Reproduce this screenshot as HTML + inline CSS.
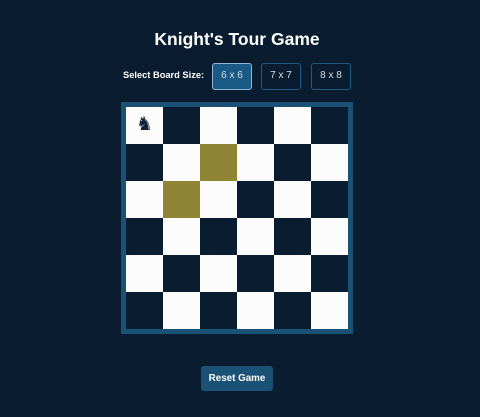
<!DOCTYPE html>
<html><head><meta charset="utf-8"><style>
html,body{margin:0;padding:0;width:480px;height:417px;background:#0a1d30;overflow:hidden;font-family:"Liberation Sans",sans-serif;}
h1{position:absolute;left:0;width:474px;top:29px;margin:0;text-align:center;color:#fff;font-size:17.5px;font-weight:bold;}
.lbl{position:absolute;left:123px;top:70px;color:#fff;font-size:9.3px;font-weight:bold;}
.btn{position:absolute;top:63px;width:40px;height:27px;box-sizing:border-box;border:1.5px solid #1d5a85;border-radius:3px;color:#d8dde3;font-size:10px;text-align:center;line-height:24px;}
.sel{background:#1a5a85;border-color:#8fb4d8;}
.board{position:absolute;left:121px;top:102px;width:222px;height:222px;border:5px solid #1a5276;background:#0a1d30;}
.c{position:absolute;width:37px;height:37px;}
.w{background:#fcfcfc;}
.h{background:#8f8535;}
.k{position:absolute;left:126px;top:114px;width:37px;text-align:center;font-size:19px;line-height:22px;color:#0e2238;}
.reset{position:absolute;left:201px;top:366px;width:72px;height:25px;background:#1a5276;border-radius:3px;color:#fff;font-size:9.8px;font-weight:bold;text-align:center;line-height:25px;}
</style></head><body>
<h1>Knight's Tour Game</h1>
<div class="lbl">Select Board Size:</div>
<div class="btn sel" style="left:212px">6 x 6</div>
<div class="btn" style="left:261px">7 x 7</div>
<div class="btn" style="left:311px">8 x 8</div>
<div class="board" id="b">
<div class="c w" style="left:0;top:0"></div><div class="c w" style="left:74px;top:0"></div><div class="c w" style="left:148px;top:0"></div>
<div class="c w" style="left:37px;top:37px"></div><div class="c h" style="left:74px;top:37px"></div><div class="c w" style="left:111px;top:37px"></div><div class="c w" style="left:185px;top:37px"></div>
<div class="c w" style="left:0;top:74px"></div><div class="c h" style="left:37px;top:74px"></div><div class="c w" style="left:74px;top:74px"></div><div class="c w" style="left:148px;top:74px"></div>
<div class="c w" style="left:37px;top:111px"></div><div class="c w" style="left:111px;top:111px"></div><div class="c w" style="left:185px;top:111px"></div>
<div class="c w" style="left:0;top:148px"></div><div class="c w" style="left:74px;top:148px"></div><div class="c w" style="left:148px;top:148px"></div>
<div class="c w" style="left:37px;top:185px"></div><div class="c w" style="left:111px;top:185px"></div><div class="c w" style="left:185px;top:185px"></div>
</div>
<div class="k">♞</div>
<div class="reset">Reset Game</div>
</body></html>
